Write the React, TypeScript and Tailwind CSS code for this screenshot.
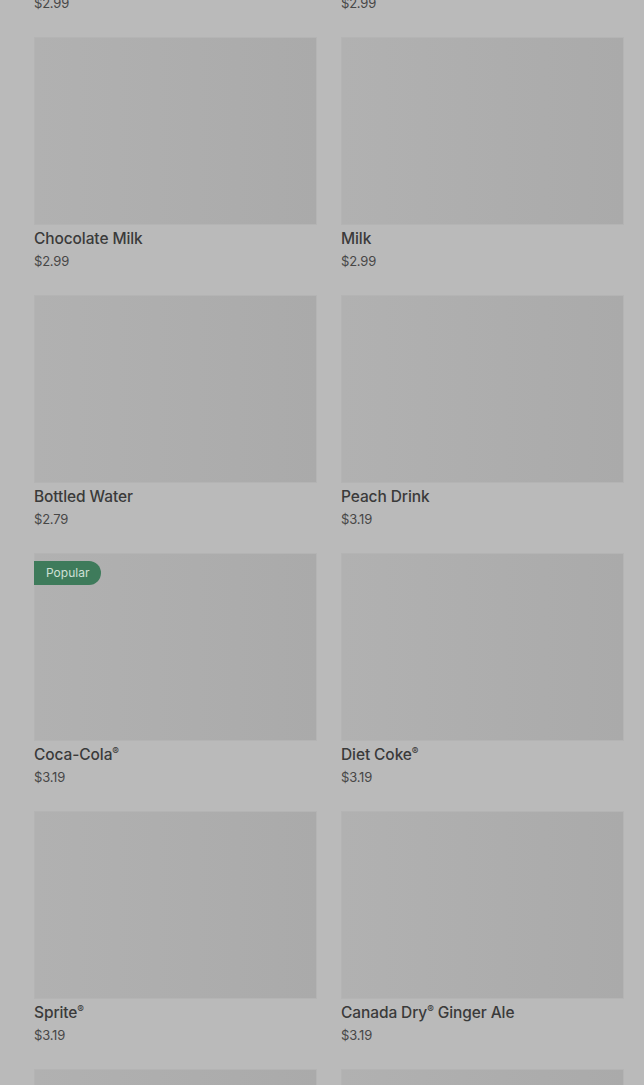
import React from "react";

type Item = { name: string; price: string; popular?: boolean };

const items: Item[] = [
  { name: "Orange Juice", price: "$2.99" },
  { name: "Apple Juice", price: "$2.99" },
  { name: "Chocolate Milk", price: "$2.99" },
  { name: "Milk", price: "$2.99" },
  { name: "Bottled Water", price: "$2.79" },
  { name: "Peach Drink", price: "$3.19" },
  { name: "Coca-Cola®", price: "$3.19", popular: true },
  { name: "Diet Coke®", price: "$3.19" },
  { name: "Sprite®", price: "$3.19" },
  { name: "Canada Dry® Ginger Ale", price: "$3.19" },
  { name: "Lemonade", price: "$3.19" },
  { name: "Iced Tea", price: "$3.19" },
];

// ® sits small and raised in the menu names
function Name({ text }: { text: string }) {
  const parts = text.split("®");
  return (
    <>
      {parts.map((p, i) => (
        <React.Fragment key={i}>
          {p}
          {i < parts.length - 1 && (
            <span className="relative top-[-5px] text-[10px] leading-none">®</span>
          )}
        </React.Fragment>
      ))}
    </>
  );
}

function Card({ item }: { item: Item }) {
  return (
    <div className="flex flex-col">
      <div className="relative h-[188px] bg-gradient-to-r from-[#b1b1b1] to-[#aaaaaa] border border-[#b4b4b4]">
        {item.popular && (
          <span className="absolute left-[-1px] top-[7px] h-[24px] pl-[12px] pr-[12px] flex items-center rounded-r-full bg-[#3e7b5b] text-[#cfe0d6] text-[12px]">
            Popular
          </span>
        )}
      </div>
      <div className="mt-[4px] h-[20px] text-[15.5px] leading-[20px] font-medium text-[#3a3a3a] tracking-[-0.1px]">
        <Name text={item.name} />
      </div>
      <div className="mt-[3px] text-[13px] leading-[18px] text-[#474747] tracking-[-0.2px]">{item.price}</div>
    </div>
  );
}

export default function App() {
  return (
    <div
      className="h-[1085px] overflow-hidden bg-[#bababa]"
      style={{ fontFamily: "Inter, 'Liberation Sans', sans-serif" }}
    >
      <div className="mt-[-221px] pl-[34px] pr-[20px] grid grid-cols-2 gap-x-[24px] gap-y-[25px]">
        {items.map((it) => (
          <Card key={it.name} item={it} />
        ))}
      </div>
    </div>
  );
}
